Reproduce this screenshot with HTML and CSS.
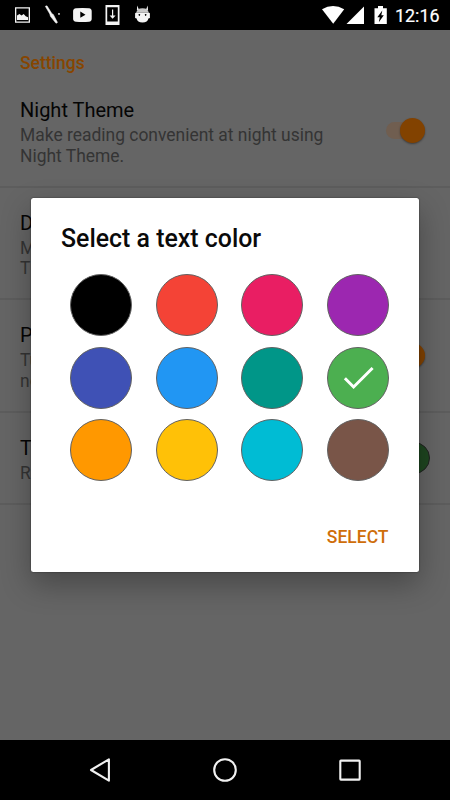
FILE: index.html
```html
<!DOCTYPE html>
<html lang="en">
<head>
<meta charset="utf-8">
<meta name="viewport" content="width=device-width">
<title>Settings</title>
<link rel="stylesheet" href="styles.css">
</head>
<body>
<div class="phone">
  <header class="status">
    <svg class="status-icons" width="160" height="30" viewBox="0 0 160 30" fill="#f4f4f4">
      <path fill-rule="evenodd" d="M15 7.300h15v15.400H15zM16.300 8.600v12.800h12.400V8.600z"/>
      <path d="M17 20v-4.500l2.500-1.500 2 1.400 2.200-1.300 2 2.200 2.300 1V20z"/>
      <path d="M45.300 6.300l1.700-.5 5 8 1.300.6 4.200 8-1.500.9-5.600-7-.6-2.300z" stroke="#f4f4f4" stroke-width=".5"/><circle cx="59" cy="13.900" r=".9"/>
      <path fill-rule="evenodd" d="M76 8.300q6.500-.8 13 0 2.700.3 2.700 3v7.400q0 2.700-2.700 3-6.500.8-13 0-2.900-.3-2.900-3v-7.400q0-2.700 2.900-3zM80.300 11.600v6.200l5.200-3.100z"/>
      <path fill-rule="evenodd" d="M105.500 5h14v20h-14zM107.200 7.200v14.300h10.600V7.200z"/>
      <path d="M112 9.500h1.200v6h2.400l-3 3.200-3-3.200h2.400z"/>
      <path d="M137.200 5.500l1.900 4.500h-2.200zM147.700 5.500l-1.900 4.500h2.200z"/>
      <path d="M136.300 12.500q.5-4.300 6.200-4.300t6.200 4.300z" fill="#c9c9c9"/>
      <path fill-rule="evenodd" d="M136.300 12.500h12.400l1.200.8v4.700l-1.500.5q-.7 4-5.900 4t-5.900-4l-1.500-.5v-4.700zM139.300 14.100a.8.800 0 1 0 .1 0zm6.300 0a.8.800 0 1 0 .1 0z"/>
    </svg>
    <svg class="status-icons" width="69" height="30" viewBox="320 0 69 30" fill="#fff">
      <path d="M333.200 23.700L322 9.300q11-6.700 22.200 0z"/>
      <path d="M364 6.500V24h-17.500z"/>
      <path fill-rule="evenodd" d="M378 6h5v2.200h3.800V24h-12.300V8.200h3.500zM382.300 10.500l-5 6.700h2.500l-1 5 5-7h-2.500z"/>
    </svg>
    <span class="clock">12:16</span>
  </header>

  <main class="settings">
    <h1 class="heading">Settings</h1>
    <section class="row first">
      <div class="label"><h2>Night Theme</h2><p>Make reading convenient at night using Night Theme.</p></div>
      <div class="switch"></div>
    </section>
    <section class="row">
      <div class="label"><h2>D</h2><p>M<br>T</p></div>
    </section>
    <section class="row">
      <div class="label"><h2>P</h2><p>Tu<br>no</p></div>
      <div class="switch"></div>
    </section>
    <section class="row last">
      <div class="label"><h2>T</h2><p>R</p></div>
      <div class="chosen"></div>
    </section>
  </main>

  <nav class="navbar">
    <svg width="450" height="60" viewBox="0 0 450 60" fill="none" stroke="#f1f1f1" stroke-width="2.100" stroke-linejoin="round">
      <path d="M108.900 19.300v21.400L91 30z"/>
      <circle cx="225" cy="30" r="10.800"/>
      <rect x="340.300" y="20.600" width="19.400" height="19" rx=".6"/>
    </svg>
  </nav>

  <div class="dialog">
    <h2 class="dialog-title">Select a text color</h2>
    <div class="palette">
      <i class="dot black"></i><i class="dot red"></i><i class="dot pink"></i><i class="dot purple"></i>
      <i class="dot indigo"></i><i class="dot blue"></i><i class="dot teal"></i>
      <i class="dot green"><svg width="60" height="60" viewBox="0 0 60 60" fill="none" stroke="#fff" stroke-width="3"><path d="M16.900 30.300l8.700 8.700 19-19"/></svg></i>
      <i class="dot orange"></i><i class="dot amber"></i><i class="dot cyan"></i><i class="dot brown"></i>
    </div>
    <button class="select">SELECT</button>
  </div>
</div>
</body>
</html>
```

FILE: styles.css
```css
* { box-sizing: border-box; }
body { margin: 0; font-family: Roboto, sans-serif; }
h1, h2, p { margin: 0; font-weight: 400; }

.phone {
  position: relative;
  width: 450px;
  height: 800px;
  display: flex;
  flex-direction: column;
  overflow: hidden;
  background: #656565;
}

.status {
  height: 30px;
  flex: none;
  display: flex;
  align-items: center;
  background: #000;
  color: #fff;
}
.status-icons:nth-child(2) { margin-left: 160px; }
.status-icons { flex: none; }
.clock {
  margin-left: 6px;
  font-size: 17.900px;
  line-height: 30px;
  padding-top: 1px;
  -webkit-text-stroke: .2px #fff;
}

.settings { flex: 1; }
.heading {
  height: 56px;
  padding: 22px 20px 0;
  font-size: 17.500px;
  line-height: 22px;
  font-weight: 500;
  color: #874500;
}
.row {
  height: 112.500px;
  display: flex;
  justify-content: space-between;
  padding: 23px 25px 0 20px;
  border-bottom: 2px solid #5d5d5d;
}
.row.first { height: 101.500px; padding-top: 12px; }
.row.last { height: 92px; padding-right: 20px; }
.label { width: 320px; }
.label h2 { font-size: 20px; line-height: 24px; color: #050505; }
.label p { margin-top: 3px; font-size: 17.450px; line-height: 20.500px; color: #343434; }

.switch {
  width: 39px;
  height: 17px;
  margin-top: 24px;
  border-radius: 9px;
  background: #705e50;
  display: flex;
  justify-content: flex-end;
  align-items: center;
}
.switch::after {
  content: "";
  flex: none;
  width: 25px;
  height: 25px;
  border-radius: 50%;
  background: #824200;
  box-shadow: 0 1px 2px rgba(0, 0, 0, .4);
}
.chosen {
  width: 32px;
  height: 32px;
  margin-top: 6.500px;
  border: 1px solid #222;
  border-radius: 50%;
  background: #1e4620;
}

.navbar { height: 60px; flex: none; background: #000; }
.navbar svg { display: block; }

.dialog {
  position: absolute;
  left: 31px;
  top: 198px;
  width: 387.500px;
  height: 374px;
  padding: 25px 30px 0;
  border-radius: 2.500px;
  background: #fff;
  box-shadow: 0 0 1.500px rgba(0, 0, 0, .7), 0 12px 30px rgba(0, 0, 0, .3);
  display: flex;
  flex-direction: column;
}
.dialog-title {
  font-size: 24.900px;
  line-height: 32px;
  font-weight: 500;
  color: #0a0a0a;
}
.palette {
  display: grid;
  grid-template-columns: repeat(4, 62px);
  grid-auto-rows: 62px;
  gap: 10.500px 23.800px;
  margin: 19.400px 0 0 8.800px;
}
.dot { display: block; border: 1px solid #626262; border-radius: 50%; }
.dot svg { display: block; }
.black { background: #000; }
.red { background: #f44336; }
.pink { background: #e91e63; }
.purple { background: #9c27b0; }
.indigo { background: #3f51b5; }
.blue { background: #2196f3; }
.teal { background: #009688; }
.green { background: #4caf50; }
.orange { background: #ff9800; }
.amber { background: #ffc107; }
.cyan { background: #00bcd4; }
.brown { background: #795548; }

.select {
  align-self: flex-end;
  margin-top: 44px;
  padding: 0;
  border: 0;
  background: none;
  font: 500 17.500px/24px Roboto, sans-serif;
  color: #cf6e0a;
}
```
